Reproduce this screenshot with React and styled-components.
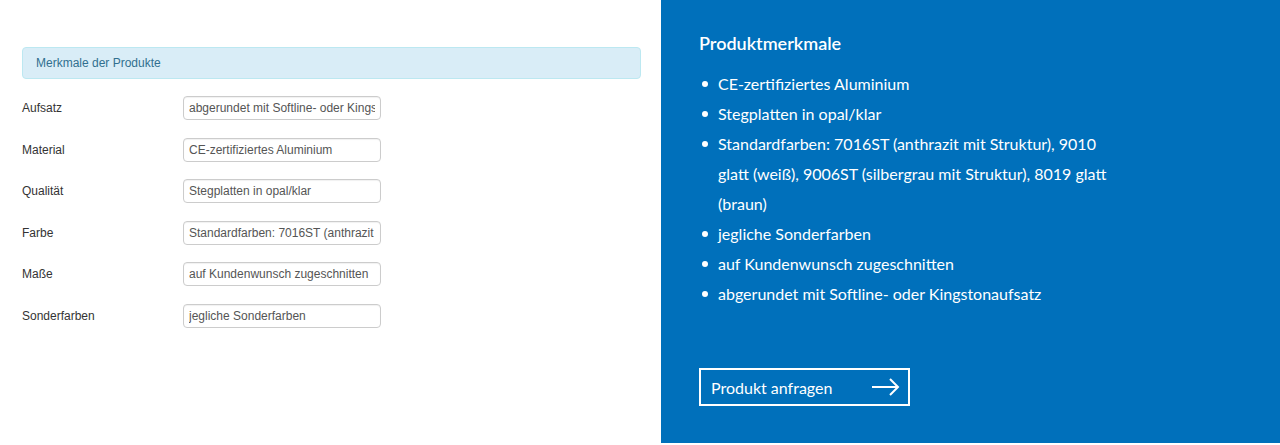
import styled, { createGlobalStyle } from "styled-components"

const GlobalStyle = createGlobalStyle`
  body {
    margin: 0;
    background: #fff;
  }
`

const Page = styled.div`
  display: flex;
  width: 1280px;
  height: 443px;
`

const Left = styled.div`
  width: 661px;
  box-sizing: border-box;
  padding: 47px 20px 0 22px;
  font-family: "Liberation Sans", Arial, sans-serif;
  font-size: 12px;
  color: #333;
`

const Alert = styled.div`
  height: 32px;
  box-sizing: border-box;
  display: flex;
  align-items: center;
  padding: 0 13px;
  background: #d9edf7;
  border: 1px solid #bce8f1;
  border-radius: 4px;
  color: #31708f;
`

const Rows = styled.div`
  display: grid;
  grid-template-columns: 161px 198px;
  row-gap: 17.5px;
  margin-top: 17px;
  align-items: center;
`

const Label = styled.div``

const Field = styled.input`
  width: 198px;
  height: 24px;
  box-sizing: border-box;
  border: 1px solid #ccc;
  border-radius: 4px;
  padding: 0 5px;
  font: inherit;
  color: #555;
  background: #fff;
  box-shadow: inset 0 1px 1px rgba(0, 0, 0, 0.06);
  outline: none;
`

const Right = styled.div`
  flex: 1;
  background: #0070bb;
  color: #fff;
  box-sizing: border-box;
  padding: 31px 0 0 38px;
  font-family: Lato, "Noto Sans", sans-serif;
`

const Heading = styled.h2`
  margin: 0;
  font-size: 18px;
  font-weight: 600;
  line-height: 24px;
`

const List = styled.ul`
  margin: 14px 0 0;
  padding: 0 0 0 19px;
  width: 410px;
  font-size: 16px;
  line-height: 30px;
  list-style: none;
`

const Item = styled.li`
  position: relative;
  &::before {
    content: "";
    position: absolute;
    left: -16px;
    top: 12px;
    width: 6px;
    height: 6px;
    border-radius: 50%;
    background: #fff;
  }
`

const Button = styled.button`
  margin-top: 59px;
  width: 211px;
  height: 38px;
  box-sizing: border-box;
  display: flex;
  align-items: center;
  justify-content: space-between;
  padding: 0 8px 0 10px;
  border: 2px solid #fff;
  background: transparent;
  color: #fff;
  font-family: inherit;
  font-size: 16px;
  cursor: pointer;
`

const fields = [
  ["Aufsatz", "abgerundet mit Softline- oder Kingstonaufsatz"],
  ["Material", "CE-zertifiziertes Aluminium"],
  ["Qualität", "Stegplatten in opal/klar"],
  ["Farbe", "Standardfarben: 7016ST (anthrazit mit Struktur), 9010 glatt (weiß), 9006ST (silbergrau mit Struktur), 8019 glatt (braun)"],
  ["Maße", "auf Kundenwunsch zugeschnitten"],
  ["Sonderfarben", "jegliche Sonderfarben"],
]

const features = [
  "CE-zertifiziertes Aluminium",
  "Stegplatten in opal/klar",
  "Standardfarben: 7016ST (anthrazit mit Struktur), 9010 glatt (weiß), 9006ST (silbergrau mit Struktur), 8019 glatt (braun)",
  "jegliche Sonderfarben",
  "auf Kundenwunsch zugeschnitten",
  "abgerundet mit Softline- oder Kingstonaufsatz",
]

const Arrow = () => (
  <svg width="29" height="18" viewBox="0 0 29 18" fill="none" stroke="#fff" strokeWidth="2">
    <path d="M1 9h26M19 1l8 8-8 8" />
  </svg>
)

const App = () => {
  return (
    <Page>
      <GlobalStyle />
      <Left>
        <Alert>Merkmale der Produkte</Alert>
        <Rows>
          {fields.map(([label, value]) => (
            <>
              <Label key={label}>{label}</Label>
              <Field key={label + "-f"} defaultValue={value} readOnly />
            </>
          ))}
        </Rows>
      </Left>
      <Right>
        <Heading>Produktmerkmale</Heading>
        <List>
          {features.map(f => (
            <Item key={f}>{f}</Item>
          ))}
        </List>
        <Button>
          Produkt anfragen
          <Arrow />
        </Button>
      </Right>
    </Page>
  )
}

export default App
